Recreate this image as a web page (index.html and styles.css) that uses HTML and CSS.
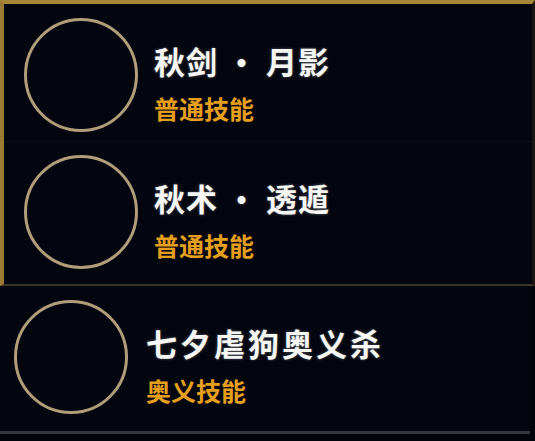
FILE: index.html
```html
<!DOCTYPE html>
<html>
<head>
	<title>技能列表</title>
	<link rel="stylesheet" href="styles.css">
</head>
<body>
	<div class="panel">
		<div class="skill">
			<div class="ring"></div>
			<div class="info">
				<div class="name">秋剑 · 月影</div>
				<div class="kind">普通技能</div>
			</div>
		</div>
		<div class="skill second">
			<div class="ring"></div>
			<div class="info">
				<div class="name">秋术 · 透遁</div>
				<div class="kind">普通技能</div>
			</div>
		</div>
	</div>
	<div class="skill ult">
		<div class="ring"></div>
		<div class="info">
			<div class="name wide">七夕虐狗奥义杀</div>
			<div class="kind">奥义技能</div>
		</div>
	</div>
</body>
</html>
```

FILE: styles.css
```css
body {
	margin: 0;
	background-color: #02040b;
	font-family: "Noto Sans CJK SC", sans-serif;
	width: 535px;
	height: 441px;
	overflow: hidden;
}
.panel {
	border-top: 4px solid #a98637;
	border-left: 4px solid #9b7a34;
	border-right: 3px solid #1a1510;
	background-color: #03060f;
	border-bottom: 2px solid #3b3428;
}
.skill {
	display: flex;
	align-items: flex-start;
	gap: 16px;
	height: 137px;
	padding: 14px 0 0 20px;
	box-sizing: border-box;
	background-color: #03060f;
}
.second {
	height: 143px;
	padding-top: 13px;
	border-top: 1px solid #0b0e16;
}
.ult {
	height: 148px;
	padding: 14px 0 0 14px;
	margin-right: 5px;
	border-bottom: 3px solid #34373d;
	gap: 18px;
}
.ring {
	width: 114px;
	height: 114px;
	border: 3px solid #b19d7b;
	border-radius: 50%;
	box-sizing: border-box;
	flex-shrink: 0;
}
.info {
	padding-top: 23px;
}
.name {
	color: #f6f6f4;
	font-size: 31px;
	font-weight: bold;
	line-height: 40px;
	letter-spacing: 1px;
	text-shadow: 0 0 3px rgba(255, 255, 255, 0.35);
}
.wide {
	letter-spacing: 3px;
}
.kind {
	color: #e59f1d;
	font-size: 25px;
	font-weight: bold;
	line-height: 30px;
	margin-top: 12px;
	letter-spacing: 0;
}
```
